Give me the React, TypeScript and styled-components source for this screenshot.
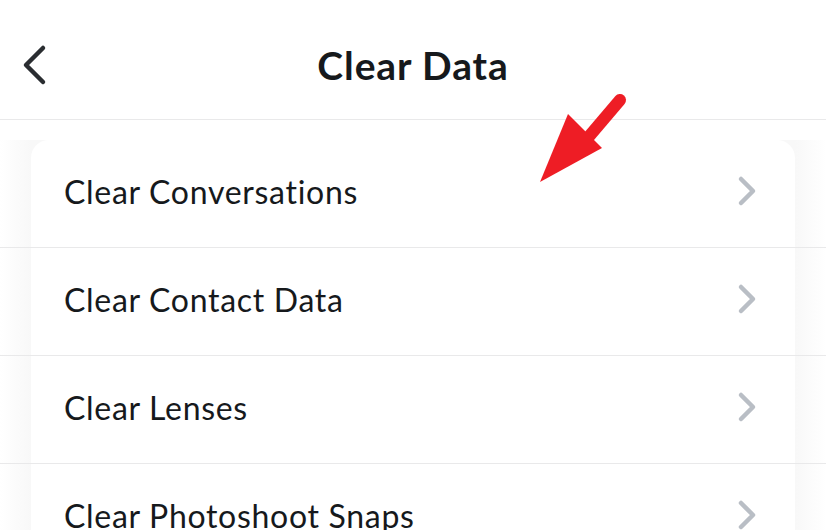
import React from "react";
import styled, { createGlobalStyle } from "styled-components";

const GlobalStyle = createGlobalStyle`
  html, body {
    margin: 0;
    padding: 0;
    background: #ffffff;
    font-family: "Lato", "Noto Sans", sans-serif;
  }
`;

const Screen = styled.div`
  position: relative;
  width: 826px;
  height: 530px;
  overflow: hidden;
  background: #ffffff;
`;

const Header = styled.div`
  position: relative;
  height: 119px;
  display: flex;
  align-items: center;
  justify-content: center;
  border-bottom: 1px solid #e9e9ea;
`;

const BackButton = styled.button`
  position: absolute;
  left: 18px;
  top: 44px;
  width: 32px;
  height: 42px;
  padding: 0;
  border: none;
  background: none;
  display: flex;
  align-items: center;
  justify-content: center;
`;

const Title = styled.h1`
  margin: 0;
  padding-top: 10px;
  font-size: 39px;
  font-weight: 700;
  color: #16191c;
  letter-spacing: 0.9px;
`;

const List = styled.div`
  display: flex;
  flex-direction: column;
  padding-top: 20px;
`;

const Row = styled.div`
  display: flex;
  border-bottom: 1px solid #e9e9ea;
  padding: 0 31px;
  background: linear-gradient(
    90deg,
    #ffffff 0px,
    #f8f8f8 31px,
    #f8f8f8 795px,
    #ffffff 826px
  );
`;

const Cell = styled.div<{ $first?: boolean }>`
  flex: 1;
  height: 107px;
  box-sizing: border-box;
  display: flex;
  align-items: center;
  justify-content: space-between;
  padding: 0 36px 5px 33px;
  background: #ffffff;
  border-radius: ${(p) => (p.$first ? "18px 18px 0 0" : "0")};
`;

const Label = styled.span`
  font-size: 32px;
  color: #16191c;
  letter-spacing: 0.7px;
`;

const ArrowOverlay = styled.svg`
  position: absolute;
  left: 530px;
  top: 88px;
`;

const Chevron = () => (
  <svg width="22" height="32" viewBox="0 0 22 32">
    <path
      d="M4 4 L16 16 L4 28"
      fill="none"
      stroke="#b9bec5"
      strokeWidth="4.5"
      strokeLinecap="round"
      strokeLinejoin="round"
    />
  </svg>
);

const items = [
  "Clear Conversations",
  "Clear Contact Data",
  "Clear Lenses",
  "Clear Photoshoot Snaps",
];

export default function App() {
  return (
    <Screen>
      <GlobalStyle />
      <Header>
        <BackButton aria-label="Back">
          <svg width="32" height="42" viewBox="0 0 32 42">
            <path
              d="M25 4 L8 21 L25 38"
              fill="none"
              stroke="#2a2d31"
              strokeWidth="4.5"
              strokeLinecap="round"
              strokeLinejoin="round"
            />
          </svg>
        </BackButton>
        <Title>Clear Data</Title>
      </Header>
      <List>
        {items.map((label, i) => (
          <Row key={label}>
            <Cell $first={i === 0}>
              <Label>{label}</Label>
              <Chevron />
            </Cell>
          </Row>
        ))}
      </List>
      <ArrowOverlay width="110" height="110" viewBox="0 0 110 110">
        <path
          d="M90 12 L56 52"
          stroke="#ee1d25"
          strokeWidth="12"
          strokeLinecap="round"
        />
        <polygon points="10,94 38,26 72,60" fill="#ee1d25" />
      </ArrowOverlay>
    </Screen>
  );
}
